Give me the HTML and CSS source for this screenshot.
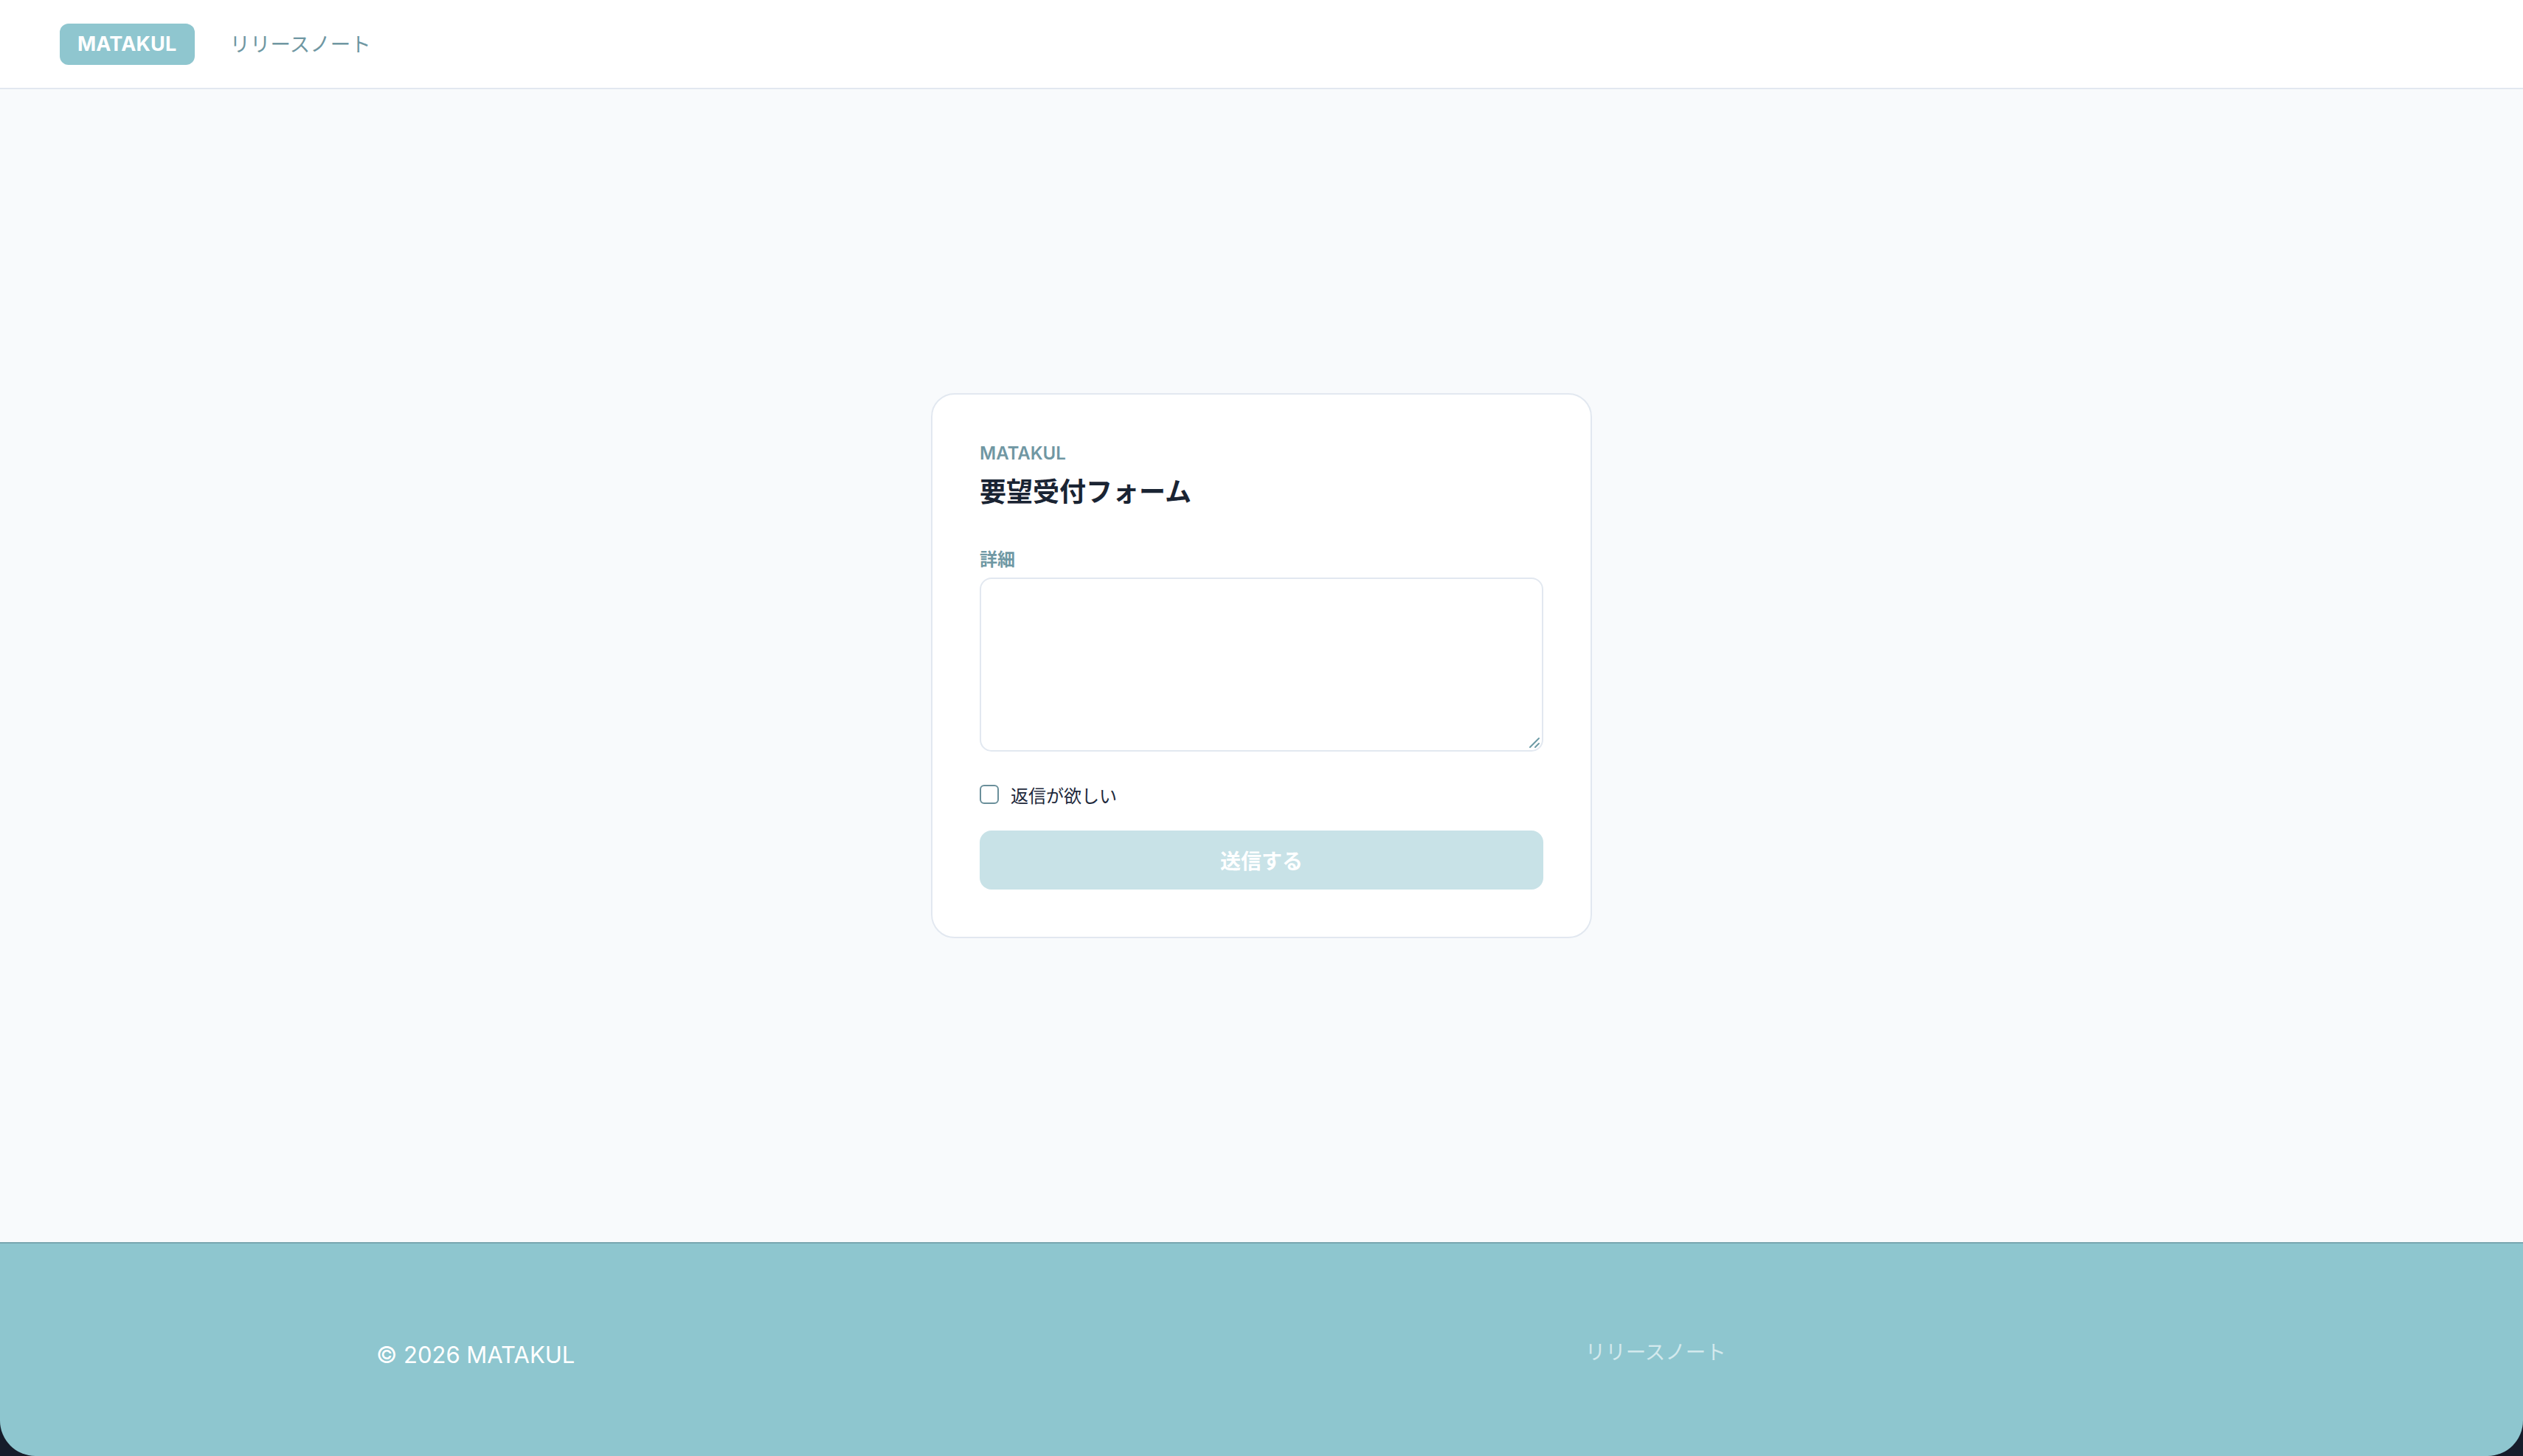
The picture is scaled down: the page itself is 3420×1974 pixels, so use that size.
FILE: index.html
```html
<!DOCTYPE html>
<html lang="ja">
<head>
<meta charset="utf-8">
<title>要望受付フォーム | MATAKUL</title>
<link rel="stylesheet" href="styles.css">
</head>
<body>
<div class="page">
  <header class="site-header">
    <a class="brand" href="#">MATAKUL</a>
    <nav class="site-nav"><a href="#">リリースノート</a></nav>
  </header>
  <main class="main">
    <form class="card">
      <p class="eyebrow">MATAKUL</p>
      <h1 class="title">要望受付フォーム</h1>
      <label class="field-label" for="detail">詳細</label>
      <div class="textarea-wrap">
        <textarea id="detail" class="textarea"></textarea>
        <svg class="grip" width="16" height="16" viewBox="0 0 16 16" aria-hidden="true">
          <line x1="2" y1="14" x2="14" y2="2" />
          <line x1="9" y1="14" x2="14" y2="9" />
        </svg>
      </div>
      <label class="check-row">
        <input type="checkbox" class="checkbox">
        <span>返信が欲しい</span>
      </label>
      <button type="button" class="submit" disabled>送信する</button>
    </form>
  </main>
  <footer class="site-footer">
    <div class="footer-copy">© 2026 MATAKUL</div>
    <div class="footer-spacer"></div>
    <nav class="footer-nav"><a href="#">リリースノート</a></nav>
  </footer>
</div>
</body>
</html>
```

FILE: styles.css
```css
* {
  box-sizing: border-box;
}

html,
body {
  margin: 0;
  padding: 0;
  height: 100%;
  background: #161c2a;
}

body {
  font-family: "Inter", "Noto Sans CJK JP", sans-serif;
  color: #1e293b;
}

a {
  text-decoration: none;
}

.page {
  height: 100vh;
  display: flex;
  flex-direction: column;
}

/* Header */
.site-header {
  height: 121px;
  flex: none;
  background: #ffffff;
  border-bottom: 2px solid #e2e8f0;
  display: flex;
  align-items: center;
  padding-left: 81px;
  gap: 48px;
}

.brand {
  display: inline-flex;
  align-items: center;
  justify-content: center;
  height: 56px;
  padding: 0 24px;
  border-radius: 12px;
  background: #8fc6cf;
  color: #ffffff;
  font-weight: 700;
  font-size: 27px;
  letter-spacing: 0.2px;
}

.site-nav a {
  color: #6f97a2;
  font-size: 27.5px;
  line-height: 40px;
}

/* Main */
.main {
  flex: 1;
  background: #f8fafc;
  display: flex;
  align-items: center;
  justify-content: center;
}

.card {
  width: 896px;
  background: #ffffff;
  border: 2px solid #e2e8f0;
  border-radius: 32px;
  padding: 64px;
  display: flex;
  flex-direction: column;
}

.eyebrow {
  margin: 0;
  font-size: 24px;
  line-height: 32px;
  font-weight: 600;
  color: #7097a3;
}

.title {
  margin: 8px 0 0;
  font-size: 36px;
  line-height: 56px;
  font-weight: 700;
  color: #1a2433;
}

.field-label {
  margin-top: 48px;
  font-size: 24px;
  line-height: 32px;
  font-weight: 700;
  color: #6f98a4;
}

.textarea-wrap {
  position: relative;
  margin-top: 8px;
}

.textarea {
  display: block;
  width: 100%;
  height: 236px;
  border: 2px solid #e2e8f0;
  border-radius: 16px;
  resize: none;
  background: #ffffff;
  font: inherit;
  padding: 16px;
  outline: none;
}

.grip {
  position: absolute;
  right: 4px;
  bottom: 4px;
  width: 16px;
  height: 16px;
}

.grip line {
  stroke: #6b9aa5;
  stroke-width: 2;
  stroke-linecap: round;
}

.check-row {
  margin-top: 42px;
  height: 32px;
  display: flex;
  align-items: center;
  gap: 16px;
  font-size: 24px;
  color: #1e293b;
}

.checkbox {
  appearance: none;
  -webkit-appearance: none;
  margin: 0;
  width: 26px;
  height: 26px;
  border: 2px solid #6a8f9a;
  border-radius: 6px;
  background: #ffffff;
  flex: none;
}

.submit {
  margin-top: 33px;
  height: 80px;
  width: 100%;
  border: none;
  border-radius: 16px;
  background: #c8e2e7;
  color: #ffffff;
  font-family: inherit;
  font-size: 28px;
  font-weight: 700;
}

/* Footer */
.site-footer {
  height: 290px;
  flex: none;
  background: #8ec6cf;
  border-top: 2px solid #78a6b0;
  border-bottom-left-radius: 48px;
  border-bottom-right-radius: 48px;
  padding: 127px 508px 0 510px;
  display: grid;
  grid-template-columns: 1fr 1fr 1fr;
  column-gap: 56px;
  align-items: start;
}

.footer-copy {
  color: #ffffff;
  font-size: 31px;
  line-height: 48px;
}

.footer-nav a {
  color: #d3e9ed;
  font-size: 27.5px;
  line-height: 40px;
}
```
